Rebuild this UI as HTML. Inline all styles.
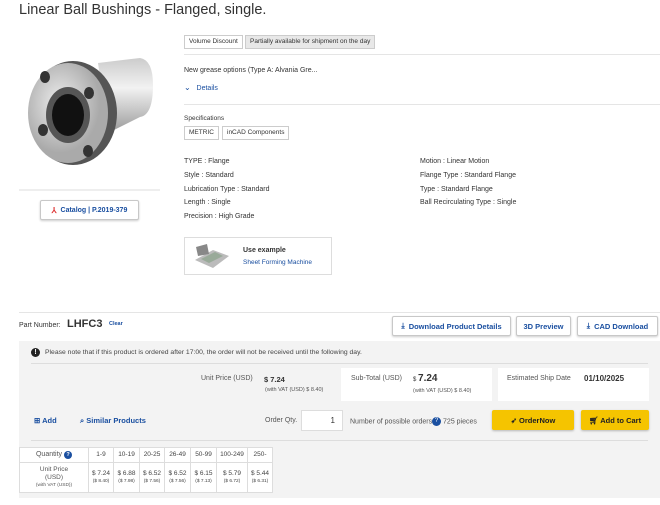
<!DOCTYPE html>
<html><head><meta charset="utf-8"><style>
*{margin:0;padding:0;box-sizing:border-box}
body{width:660px;height:505px;background:#fff;font-family:"Liberation Sans",sans-serif;color:#333;position:relative;overflow:hidden;font-size:7px}
.a{position:absolute;white-space:nowrap}
.tag{position:absolute;border:1px solid #ccc;font-size:6.5px;padding:0 4px;height:14px;line-height:12px;background:#fff}
.blue{color:#1a4fa0}
.btn{position:absolute;border:1px solid #c8c8c8;border-radius:2px;background:#fff;box-shadow:0 1px 2px rgba(0,0,0,.2);font-weight:bold;color:#1a4fa0;font-size:7.5px;display:flex;align-items:center;justify-content:center;gap:4px}
.yb{position:absolute;background:#f5c400;border-radius:2px;box-shadow:0 1px 2px rgba(0,0,0,.25);font-weight:bold;font-size:7.5px;color:#222;display:flex;align-items:center;justify-content:center;gap:5px}
table{border-collapse:collapse;position:absolute;left:19px;top:447px;background:#fff;font-size:6.5px;table-layout:fixed;width:253px}
td{border:1px solid #ddd;text-align:center;padding:0;color:#444;white-space:nowrap;overflow:hidden;line-height:1.15}
td span{font-size:4.8px}
</style></head><body>
<div class="a" style="left:19px;top:2px;font-size:14.5px;color:#333">Linear Ball Bushings - Flanged, single.</div>

<svg class="a" style="left:28px;top:55px" width="130" height="115" viewBox="0 0 130 115">
<defs><linearGradient id="g" x1="0" y1="0" x2="0" y2="1"><stop offset="0" stop-color="#ccc"/><stop offset=".4" stop-color="#f2f2f2"/><stop offset="1" stop-color="#999"/></linearGradient>
<radialGradient id="f" cx=".4" cy=".4"><stop offset="0" stop-color="#eee"/><stop offset="1" stop-color="#aaa"/></radialGradient></defs>
<path d="M70 8 L112 3 Q125 5 125 30 Q125 60 112 62 L80 78 Z" fill="url(#g)"/>
<ellipse cx="45" cy="58" rx="44" ry="52" fill="#555"/>
<ellipse cx="40" cy="58" rx="40" ry="50" fill="url(#f)"/>
<ellipse cx="40" cy="60" rx="22" ry="28" fill="#555"/>
<ellipse cx="40" cy="60" rx="16" ry="21" fill="#111"/>
<ellipse cx="17" cy="22" rx="5" ry="6" fill="#333"/><ellipse cx="61" cy="38" rx="5" ry="6" fill="#333"/>
<ellipse cx="15" cy="75" rx="5" ry="6" fill="#333"/><ellipse cx="60" cy="96" rx="5" ry="6" fill="#333"/>
</svg>
<div class="a" style="left:19px;top:189px;width:141px;height:2px;background:#eee"></div>
<div class="btn" style="left:40px;top:200px;width:99px;height:20px;font-size:7px"><span style="color:#d33;font-size:8px">⅄</span>Catalog | P.2019-379</div>

<div class="tag" style="left:184px;top:35px">Volume Discount</div>
<div class="tag" style="left:245px;top:35px;background:#e8e8e8;border-color:#ccc">Partially available for shipment on the day</div>
<div class="a" style="left:184px;top:54px;width:476px;height:1px;background:#e5e5e5"></div>
<div class="a" style="left:184px;top:67px">New grease options (Type A: Alvania Gre...</div>
<div class="a blue" style="left:184px;top:83px"><span style="font-size:8px">⌄</span>&nbsp;&nbsp;&nbsp;Details</div>
<div class="a" style="left:184px;top:104px;width:476px;height:1px;background:#e5e5e5"></div>
<div class="a" style="left:184px;top:115px;font-size:6.5px">Specifications</div>
<div class="tag" style="left:184px;top:126px">METRIC</div>
<div class="tag" style="left:222px;top:126px">inCAD Components</div>
<div class="a" style="left:184px;top:155px;line-height:13.8px">TYPE : Flange<br>Style : Standard<br>Lubrication Type : Standard<br>Length : Single<br>Precision : High Grade</div>
<div class="a" style="left:420px;top:155px;line-height:13.8px">Motion : Linear Motion<br>Flange Type : Standard Flange<br>Type : Standard Flange<br>Ball Recirculating Type : Single</div>
<div class="a" style="left:184px;top:237px;width:148px;height:38px;border:1px solid #ddd"></div>
<svg class="a" style="left:193px;top:242px" width="40" height="30"><path d="M2 18 L20 8 L36 14 L20 26 Z" fill="#bbb"/><path d="M8 17 L22 10 L30 14 L16 21Z" fill="#9a9"/><path d="M3 5 L14 2 L16 12 L5 14Z" fill="#888"/></svg>
<div class="a" style="left:243px;top:247px;font-weight:bold;font-size:7px">Use example</div>
<div class="a blue" style="left:243px;top:259px;font-size:6.5px">Sheet Forming Machine</div>

<div class="a" style="left:19px;top:312px;width:641px;height:1px;background:#e5e5e5"></div>
<div class="a" style="left:19px;top:322px;font-size:7px">Part Number:</div>
<div class="a" style="left:67px;top:318px;font-size:11px;font-weight:bold;color:#333">LHFC3</div>
<div class="a blue" style="left:109px;top:321px;font-size:5.5px;font-weight:bold">Clear</div>
<div class="btn" style="left:392px;top:316px;width:119px;height:20px"><span>⤓</span>Download Product Details</div>
<div class="btn" style="left:516px;top:316px;width:55px;height:20px">3D Preview</div>
<div class="btn" style="left:577px;top:316px;width:81px;height:20px"><span>⤓</span>CAD Download</div>

<div class="a" style="left:19px;top:341px;width:641px;height:157px;background:#f3f3f3"></div>
<div class="a" style="left:31px;top:348px;width:9px;height:9px;border-radius:50%;background:#222;color:#fff;font-size:7px;text-align:center;line-height:9px;font-weight:bold">!</div>
<div class="a" style="left:45px;top:349px;font-size:6.8px;color:#444">Please note that if this product is ordered after 17:00, the order will not be received until the following day.</div>
<div class="a" style="left:31px;top:363px;width:617px;height:1px;background:#ddd"></div>
<div class="a" style="left:201px;top:375px;font-size:7px;color:#555">Unit Price (USD)</div>
<div class="a" style="left:264px;top:375px;font-size:7.5px;font-weight:bold">$ 7.24</div>
<div class="a" style="left:265px;top:387px;font-size:5.5px;color:#555">(with VAT (USD) $ 8.40)</div>
<div class="a" style="left:341px;top:368px;width:151px;height:33px;background:#fff"></div>
<div class="a" style="left:351px;top:375px;font-size:7px;color:#555">Sub-Total (USD)</div>
<div class="a" style="left:413px;top:373px;font-size:10px;font-weight:bold"><span style="font-size:6px;font-weight:normal">$ </span>7.24</div>
<div class="a" style="left:413px;top:388px;font-size:5.5px;color:#555">(with VAT (USD) $ 8.40)</div>
<div class="a" style="left:498px;top:368px;width:151px;height:33px;background:#fff"></div>
<div class="a" style="left:507px;top:375px;font-size:7px;color:#555">Estimated Ship Date</div>
<div class="a" style="left:584px;top:374px;font-size:8px;font-weight:bold">01/10/2025</div>

<div class="a blue" style="left:34px;top:416px;font-size:7.5px;font-weight:bold">⊞ Add</div>
<div class="a blue" style="left:80px;top:416px;font-size:7.5px;font-weight:bold">⌕ Similar Products</div>
<div class="a" style="left:265px;top:417px;font-size:7px;color:#555">Order Qty.</div>
<div class="a" style="left:301px;top:410px;width:42px;height:21px;background:#fff;border:1px solid #ddd;font-size:8px;text-align:right;padding-right:7px;line-height:19px">1</div>
<div class="a" style="left:350px;top:417px;font-size:7px;color:#555">Number of possible orders<span style="display:inline-block;width:9px;height:9px;border-radius:50%;background:#1a4fa0;color:#fff;font-size:6px;text-align:center;line-height:9px;vertical-align:middle">?</span> 725 pieces</div>
<div class="yb" style="left:492px;top:410px;width:82px;height:20px">➶ OrderNow</div>
<div class="yb" style="left:581px;top:410px;width:68px;height:20px">🛒︎ Add to Cart</div>
<div class="a" style="left:31px;top:440px;width:617px;height:1px;background:#ddd"></div>

<table>
<colgroup><col style="width:69px"><col style="width:25px"><col style="width:26px"><col style="width:25px"><col style="width:26px"><col style="width:26px"><col style="width:31px"><col style="width:25px"></colgroup>
<tr style="height:15px"><td style="color:#555;font-size:7px">Quantity <b style="display:inline-block;width:8px;height:8px;border-radius:50%;background:#1a4fa0;color:#fff;font-size:5.5px;line-height:8px">?</b></td><td>1-9</td><td>10-19</td><td>20-25</td><td>26-49</td><td>50-99</td><td>100-249</td><td>250-</td></tr>
<tr style="height:30px"><td style="color:#555">Unit Price<br>(USD)<br><span>(with VAT (USD))</span></td>
<td>$ 7.24<br><span>($ 8.40)</span></td><td>$ 6.88<br><span>($ 7.98)</span></td><td>$ 6.52<br><span>($ 7.56)</span></td><td>$ 6.52<br><span>($ 7.56)</span></td><td>$ 6.15<br><span>($ 7.13)</span></td><td>$ 5.79<br><span>($ 6.72)</span></td><td>$ 5.44<br><span>($ 6.31)</span></td></tr>
</table>
</body></html>
